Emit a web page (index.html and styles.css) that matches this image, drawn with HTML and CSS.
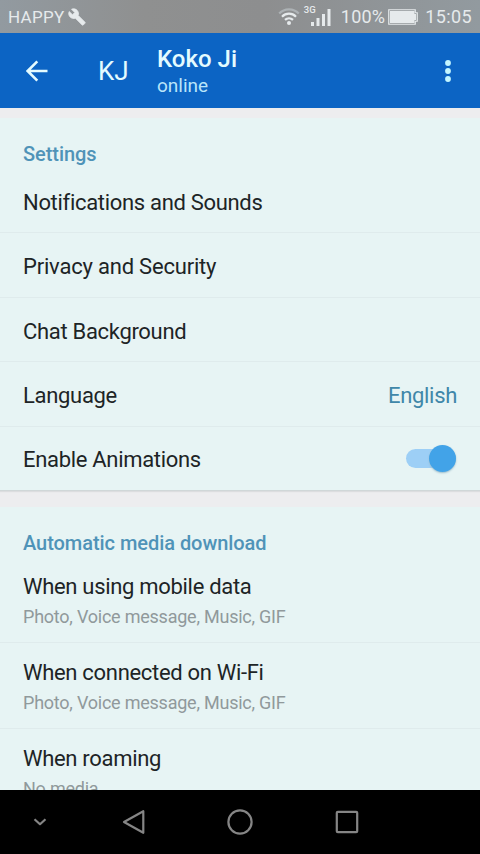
FILE: index.html
```html
<!DOCTYPE html>
<html lang="en">
<head>
  <meta charset="UTF-8">
  <title>Settings</title>
  <link rel="stylesheet" href="styles.css">
</head>
<body>
<div class="status">
  <span class="carrier">HAPPY</span>
  <svg class="wrench" width="18" height="18" viewBox="0 0 24 24"><path d="M22.7 19l-9.1-9.1c.9-2.3.4-5-1.5-6.9-2-2-5-2.4-7.4-1.3L9 6 6 9 1.6 4.7C.4 7.1.9 10.1 2.9 12.1c1.9 1.9 4.6 2.4 6.9 1.5l9.1 9.1c.4.4 1 .4 1.4 0l2.3-2.3c.5-.4.5-1.1.1-1.4z"/></svg>
  <svg class="wifi" width="22" height="18" viewBox="0 0 22 18">
    <path class="faint" d="M1.2 5.6C6.5 0 15.5 0 20.8 5.6"/>
    <path d="M4 8.7C8 4.7 14 4.7 18 8.7M7 11.9C9.3 9.7 12.7 9.7 15 11.9"/>
    <circle cx="11" cy="15" r="2"/>
  </svg>
  <span class="signal">
    <span class="net">3G</span>
    <svg width="20" height="17" viewBox="0 0 20 17"><path d="M0 13h3v4H0zM5.5 9h3v8h-3zM11 5h3v12h-3zM16.5 0h3v17h-3z"/></svg>
  </span>
  <span class="percent">100%</span>
  <svg class="battery" width="31" height="16" viewBox="0 0 31 16">
    <path class="case" d="M.75.75h26.5v3h2v8.500h-2v3H.75z"/>
    <path d="M2 2h24.500v3h1.500v6h-1.500v3H2z"/>
  </svg>
  <span class="clock">15:05</span>
</div>
<div class="header">
  <svg class="back" width="22" height="22" viewBox="0 0 22 22"><path d="M21.5 11H1.7M11.3 1.3L1.6 11l9.7 9.7"/></svg>
  <div class="avatar">KJ</div>
  <div class="user">
    <div class="name">Koko Ji</div>
    <div class="state">online</div>
  </div>
  <svg class="more" width="8" height="24" viewBox="0 0 8 24"><circle cx="4" cy="4" r="2.9"/><circle cx="4" cy="12" r="2.9"/><circle cx="4" cy="20" r="2.9"/></svg>
</div>
<div class="content">
  <div class="section">
    <h2>Settings</h2>
    <ul>
      <li>Notifications and Sounds</li>
      <li class="privacy">Privacy and Security</li>
      <li>Chat Background</li>
      <li>Language<span class="value">English</span></li>
      <li>Enable Animations<span class="switch"><span class="knob"></span></span></li>
    </ul>
  </div>
  <div class="section media">
    <h2>Automatic media download</h2>
    <ul>
      <li>When using mobile data<small>Photo, Voice message, Music, GIF</small></li>
      <li>When connected on Wi-Fi<small>Photo, Voice message, Music, GIF</small></li>
      <li>When roaming<small>No media</small></li>
    </ul>
  </div>
</div>
<div class="nav">
  <svg class="hide" width="14" height="8" viewBox="0 0 14 8"><path d="M1.5 1.2L7 6.2l5.5-5"/></svg>
  <svg width="24" height="26" viewBox="0 0 24 26"><path d="M21.3 2.2v21.6L2 13z"/></svg>
  <svg width="26" height="26" viewBox="0 0 26 26"><circle cx="13" cy="13" r="11.6"/></svg>
  <svg width="24" height="24" viewBox="0 0 24 24"><rect x="1.8" y="1.8" width="20.4" height="20.4" rx="1"/></svg>
</div>
</body>
</html>
```

FILE: styles.css
```css
* {
  padding: 0;
  margin: 0;
  list-style: none;
  box-sizing: border-box;
}

body {
  width: 480px;
  height: 854px;
  overflow: hidden;
  display: flex;
  flex-direction: column;
  font-family: Roboto, sans-serif;
  background: #ededef;
}

.status {
  height: 33px;
  flex: none;
  display: flex;
  align-items: center;
  padding: 1px 8px 0;
  background: linear-gradient(90deg, #929aa0, #8f9090 30%, #8d8e8f 55%, #929a9f);
  color: #e6eaec;
  font-size: 18px;
  line-height: 30px;
}

.status svg {
  fill: #e6eaec;
}

.carrier {
  font-size: 17px;
  letter-spacing: 0.3px;
}

.status .wrench {
  margin-left: 3px;
  stroke: #e6eaec;
  stroke-width: 1;
}

.wifi {
  margin-left: auto;
}

.status .wifi path {
  fill: none;
  stroke: #e6eaec;
  stroke-width: 2.2;
}

.status .wifi .faint {
  stroke: #adb2b5;
}

.signal {
  width: 27px;
  height: 18px;
  margin-left: 4px;
  position: relative;
  display: flex;
  justify-content: flex-end;
  align-items: flex-end;
}

/* sits over the low signal bars */
.net {
  position: absolute;
  left: 0;
  top: -3px;
  font-size: 9.5px;
  font-weight: 500;
  line-height: 9px;
}

.percent {
  margin-left: 10px;
  letter-spacing: 0.2px;
}

.battery {
  margin-left: 3px;
}

.status .battery .case {
  fill: none;
  stroke: #e6eaec;
  stroke-width: 1.2;
}

.clock {
  margin-left: 6px;
  letter-spacing: 0.4px;
}

.header {
  height: 75px;
  flex: none;
  display: flex;
  align-items: center;
  padding: 0 28px 0 26px;
  background: #0c64c4;
  color: #e4fbff;
}

.back {
  fill: none;
  stroke: #e4fbff;
  stroke-width: 2.6;
}

.avatar {
  width: 59px;
  margin-left: 50px;
  font-size: 26px;
}

.user {
  flex: 1;
  padding-top: 3px;
}

.name {
  font-size: 24px;
  line-height: 27px;
  font-weight: 500;
}

.state {
  color: #b9e4fa;
  font-size: 19px;
  line-height: 26px;
}

.more {
  fill: #c4f6ff;
}

.content {
  flex: 1;
  min-height: 0;
  overflow: hidden;
  padding-top: 10px;
}

.section {
  height: 373px;
  padding-top: 25px;
  background: #e7f4f4;
  border-bottom: 1px solid #d0d7d8;
  box-shadow: 0 1px 1px #dcdddf;
}

.section h2 {
  height: 26px;
  padding-left: 23px;
  color: #4f93b8;
  font-size: 20px;
  line-height: 22px;
  font-weight: 500;
  letter-spacing: -0.05px;
}

.section li {
  height: 64.4px;
  display: flex;
  justify-content: space-between;
  align-items: center;
  padding: 4px 23px 0;
  border-bottom: 1px solid #dfebec;
  color: #1d2426;
  font-size: 22px;
  letter-spacing: -0.31px;
}

.section .privacy {
  padding-top: 3px;
  letter-spacing: -0.2px;
}

.section li:last-child {
  border-bottom: 0;
  padding-top: 2px;
}

.value {
  color: #3f87a9;
}

.switch {
  width: 50px;
  height: 19px;
  margin-top: -3px;
  margin-right: 1px;
  border-radius: 10px;
  background: #9dcff6;
  position: relative;
}

.knob {
  width: 27px;
  height: 27px;
  position: absolute;
  right: 0;
  top: -4px;
  border-radius: 50%;
  background: #42a3e8;
  box-shadow: 0 1px 2px #9bbccb;
}

.media {
  margin-top: 16px;
}

.media h2 {
  height: 25px;
}

.section.media li {
  height: 86px;
  flex-direction: column;
  align-items: flex-start;
  justify-content: flex-start;
  padding-top: 16px;
  line-height: 28px;
}

.media small {
  margin-top: 4px;
  color: #90999b;
  font-size: 18px;
  line-height: 24px;
  letter-spacing: -0.23px;
}

.nav {
  height: 64px;
  flex: none;
  display: grid;
  grid-template-columns: 80px 107px 106px 107px;
  align-items: center;
  justify-items: center;
  background: #000;
}

.nav svg {
  fill: none;
  stroke: #858585;
  stroke-width: 2.2;
  stroke-linejoin: round;
}
```
